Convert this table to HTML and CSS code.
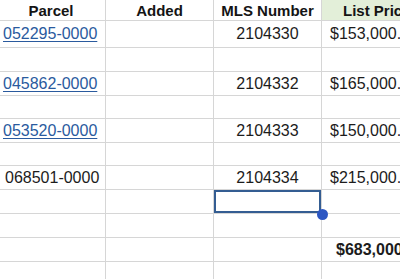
FILE: index.html
```html
<!DOCTYPE html>
<html>
<head>
<meta charset="utf-8">
<link rel="stylesheet" href="styles.css">
</head>
<body>
<div class="sheet">
  <div class="c h">Parcel</div><div class="c h">Added</div><div class="c h">MLS Number</div><div class="c h green">List Price</div>

  <div class="c l"><a class="link">052295-0000</a></div><div class="c"></div><div class="c m">2104330</div><div class="c p">$153,000.00</div>
  <div class="c"></div><div class="c"></div><div class="c"></div><div class="c"></div>
  <div class="c l"><a class="link">045862-0000</a></div><div class="c"></div><div class="c m">2104332</div><div class="c p">$165,000.00</div>
  <div class="c"></div><div class="c"></div><div class="c"></div><div class="c"></div>
  <div class="c l"><a class="link">053520-0000</a></div><div class="c"></div><div class="c m">2104333</div><div class="c p">$150,000.00</div>
  <div class="c"></div><div class="c"></div><div class="c"></div><div class="c"></div>
  <div class="c l plain">068501-0000</div><div class="c"></div><div class="c m">2104334</div><div class="c p">$215,000.00</div>
  <div class="c"></div><div class="c"></div><div class="c sel"><span class="handle"></span></div><div class="c"></div>
  <div class="c"></div><div class="c"></div><div class="c"></div><div class="c"></div>
  <div class="c"></div><div class="c"></div><div class="c"></div><div class="c p total">$683,000.00</div>
  <div class="c"></div><div class="c"></div><div class="c"></div><div class="c"></div>
</div>
</body>
</html>
```
FILE: styles.css
```css
html, body {
  margin: 0;
  padding: 0;
  background: #ffffff;
  overflow: hidden;
  width: 400px;
  height: 279px;
}
.sheet {
  display: grid;
  grid-template-columns: 109px 108px 108px 108px;
  grid-template-rows: 21px 27px 24px 24px 23px 24px 23px 24px 24px 24px 24px 24px;
  margin-left: -3px;
  font-family: "Liberation Sans", Arial, sans-serif;
  font-size: 16px;
  color: #1c1c1c;
}
.c {
  border-right: 1px solid #d6d6d6;
  border-bottom: 1px solid #d6d6d6;
  display: flex;
  align-items: center;
  white-space: nowrap;
  overflow: visible;
  position: relative;
}
.h {
  font-weight: bold;
  font-size: 15px;
  justify-content: center;
  color: #141414;
}
.green {
  background: #e3efd9;
  justify-content: flex-start;
  padding-left: 21px;
}
.l {
  padding-left: 6px;
}
.plain {
  padding-left: 8px;
}
.link {
  color: #2a5a9e;
  text-decoration: underline;
  text-underline-offset: 2px;
}
.m {
  justify-content: center;
}
.p {
  justify-content: flex-end;
  padding-right: 10px;
}
.total {
  font-weight: bold;
  padding-right: 4px;
}
.sel {
  box-shadow: inset 0 0 0 2px #345d92;
}
.handle {
  position: absolute;
  right: -7px;
  bottom: -7px;
  width: 11px;
  height: 11px;
  border-radius: 50%;
  background: #2c56c2;
  z-index: 2;
}
```
